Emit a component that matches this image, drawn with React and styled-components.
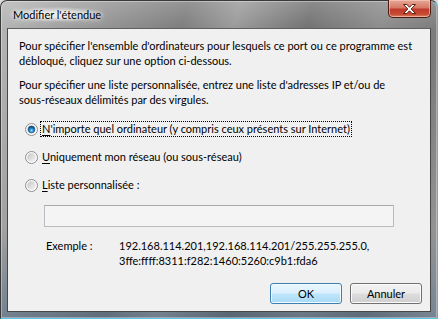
import React from "react";
import styled, { createGlobalStyle } from "styled-components";

const Global = createGlobalStyle`
  html, body { margin: 0; padding: 0; }
  body {
    width: 438px;
    height: 319px;
    overflow: hidden;
    background: #dcdcdc;
    font-family: "Lato", "Liberation Sans", sans-serif;
    font-size: 11px;
    color: #000;
  }
`;

const Window = styled.div`
  box-sizing: border-box;
  width: 438px;
  height: 319px;
  display: flex;
  flex-direction: column;
  padding: 0 6px 6px 6px;
  border: 1px solid #3a3a3a;
  border-right-color: #4fb6d6;
  border-bottom-color: #5cc6e6;
  border-radius: 7px 7px 0 0;
  box-shadow: inset 0 0 0 1px rgba(255, 255, 255, 0.35);
  background:
    linear-gradient(180deg, rgba(255, 255, 255, 0.18) 0px, rgba(255, 255, 255, 0) 28px),
    linear-gradient(0deg, rgba(40, 80, 120, 0.35) 0px, rgba(40, 80, 120, 0) 90px),
    linear-gradient(105deg, #b6b6b6 0%, #929292 22%, #7d7d7d 36%, #9a9a9a 46%, #727272 60%, #8c8c8c 74%, #7a7a7a 86%, #a2a2a2 100%);
`;

const TitleBar = styled.div`
  display: flex;
  justify-content: space-between;
  align-items: flex-start;
  height: 27px;
  padding-left: 2px;
  flex: none;
`;

const Title = styled.div`
  margin-top: 6px;
  line-height: 15px;
  font-size: 11px;
  color: #000;
  padding: 0 4px;
  border-radius: 8px;
  background: radial-gradient(ellipse at center, rgba(255, 255, 255, 0.75) 20%, rgba(255, 255, 255, 0) 72%);
  text-shadow: 0 0 4px rgba(255, 255, 255, 0.9), 0 0 8px rgba(255, 255, 255, 0.8);
`;

const CloseButton = styled.div`
  box-sizing: border-box;
  width: 43px;
  height: 18px;
  margin-top: -1px;
  display: flex;
  align-items: center;
  justify-content: center;
  border: 1px solid #4b1c14;
  border-top: none;
  border-radius: 0 0 5px 5px;
  box-shadow: inset 0 0 0 1px rgba(255, 210, 200, 0.55);
  background: linear-gradient(180deg, #e6a898 0%, #d77a66 45%, #c0392b 55%, #c84c34 85%, #e08a66 100%);
`;

const Client = styled.div`
  flex: 1;
  display: flex;
  flex-direction: column;
  padding: 9px 8px 7px 11px;
  background: #f0f0f0;
  border: 1px solid #474747;
  border-top-color: #606060;
`;

const Para = styled.p`
  margin: 0 0 9px 0;
  line-height: 15px;
  &:last-of-type { margin-bottom: 0; }
`;

const RadioGroup = styled.div`
  display: flex;
  flex-direction: column;
  gap: 12px;
  margin: 14px 0 0 6px;
`;

const RadioRow = styled.label`
  display: flex;
  align-items: center;
  height: 16px;
  gap: 3px;
`;

const RadioLabel = styled.span`
  line-height: 14px;
  padding: 0 1px;
  outline: ${(p) => (p.$focused ? "1px dotted #000" : "none")};
  u { text-decoration: underline; text-underline-offset: 2px; }
`;

const TextBox = styled.div`
  box-sizing: border-box;
  width: 350px;
  height: 22px;
  margin: 12px 0 0 25px;
  background: #f4f4f4;
  border: 1px solid #b9bdc1;
  border-top-color: #a4a9ae;
`;

const Example = styled.div`
  display: grid;
  grid-template-columns: 73px 1fr;
  margin: 11px 0 0 27px;
  line-height: 15px;
`;

const Buttons = styled.div`
  display: flex;
  justify-content: flex-end;
  gap: 8px;
  margin-top: auto;
`;

const Button = styled.div`
  box-sizing: border-box;
  width: 72px;
  height: 21px;
  display: flex;
  align-items: center;
  justify-content: center;
  border-radius: 3px;
  border: 1px solid ${(p) => (p.$default ? "#3c7fb1" : "#707070")};
  box-shadow: inset 0 0 0 1px ${(p) => (p.$default ? "#f4fbff" : "#fbfbfb")};
  background: ${(p) =>
    p.$default
      ? "linear-gradient(180deg, #eaf6fd 0%, #d9f0fc 48%, #bee6fd 52%, #a7d9f5 100%)"
      : "linear-gradient(180deg, #f2f2f2 0%, #ebebeb 48%, #dddddd 52%, #cfcfcf 100%)"};
`;

function CloseGlyph() {
  return (
    <svg width="13" height="10" viewBox="0 0 13 10">
      <polygon
        points="0.5,0.5 3.8,0.5 6.5,3.2 9.2,0.5 12.5,0.5 8.2,5 12.5,9.5 9.2,9.5 6.5,6.8 3.8,9.5 0.5,9.5 4.8,5"
        fill="#ffffff"
        stroke="#5a1f14"
        strokeWidth="1"
        strokeLinejoin="round"
      />
    </svg>
  );
}

function RadioIcon({ checked, id }) {
  return (
    <svg width="13" height="13" viewBox="0 0 13 13" style={{ flex: "none" }}>
      <defs>
        <linearGradient id={`ring${id}`} x1="0" y1="0" x2="1" y2="1">
          <stop offset="0" stopColor="#f4f4f4" />
          <stop offset="1" stopColor="#ffffff" />
        </linearGradient>
        <linearGradient id={`in${id}`} x1="0" y1="0" x2="1" y2="1">
          <stop offset="0" stopColor="#c4c4c4" />
          <stop offset="1" stopColor="#f6f6f6" />
        </linearGradient>
        <radialGradient id={`dot${id}`} cx="0.5" cy="0.65" r="0.6">
          <stop offset="0" stopColor="#8fe3ff" />
          <stop offset="0.45" stopColor="#2b8fd6" />
          <stop offset="1" stopColor="#0b3d70" />
        </radialGradient>
      </defs>
      <circle cx="6.5" cy="6.5" r="6" fill={`url(#ring${id})`} stroke="#8e8f8f" strokeWidth="1" />
      <circle cx="6.5" cy="6.5" r="4.3" fill={`url(#in${id})`} />
      {checked && <circle cx="6.5" cy="6.5" r="3.4" fill={`url(#dot${id})`} stroke="#1a4f80" strokeWidth="0.5" />}
    </svg>
  );
}

const options = [
  { key: "N", rest: "'importe quel ordinateur (y compris ceux présents sur Internet)", checked: true },
  { key: "U", rest: "niquement mon réseau (ou sous-réseau)" },
  { key: "L", rest: "iste personnalisée :" },
];

export default function App() {
  return (
    <>
      <Global />
      <Window>
        <TitleBar>
          <Title>Modifier l'étendue</Title>
          <CloseButton>
            <CloseGlyph />
          </CloseButton>
        </TitleBar>
        <Client>
          <Para>
            Pour spécifier l'ensemble d'ordinateurs pour lesquels ce port ou ce programme est
            <br />
            débloqué, cliquez sur une option ci-dessous.
          </Para>
          <Para>
            Pour spécifier une liste personnalisée, entrez une liste d'adresses IP et/ou de
            <br />
            sous-réseaux délimités par des virgules.
          </Para>
          <RadioGroup>
            {options.map((o, i) => (
              <RadioRow key={o.key}>
                <RadioIcon checked={o.checked} id={i} />
                <RadioLabel $focused={o.checked}>
                  <u>{o.key}</u>
                  {o.rest}
                </RadioLabel>
              </RadioRow>
            ))}
          </RadioGroup>
          <TextBox />
          <Example>
            <span>Exemple :</span>
            <span>
              192.168.114.201,192.168.114.201/255.255.255.0,
              <br />
              3ffe:ffff:8311:f282:1460:5260:c9b1:fda6
            </span>
          </Example>
          <Buttons>
            <Button $default>OK</Button>
            <Button>Annuler</Button>
          </Buttons>
        </Client>
      </Window>
    </>
  );
}
